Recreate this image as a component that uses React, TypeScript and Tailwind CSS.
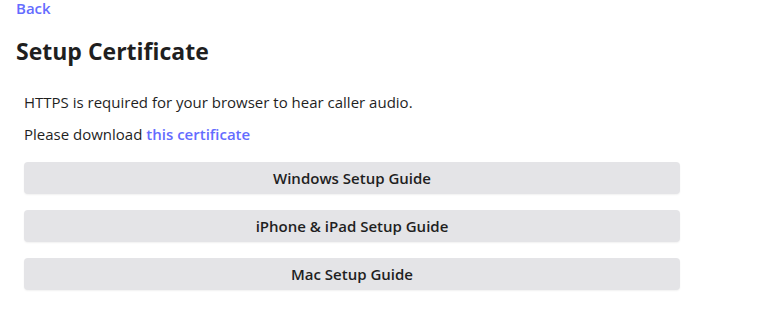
const guides = ["Windows Setup Guide", "iPhone & iPad Setup Guide", "Mac Setup Guide"]

export default function App() {
  return (
    <div
      className="min-h-screen bg-white px-4 text-[#213547]"
      style={{ fontFamily: '"Open Sans", "Noto Sans", sans-serif' }}
    >
      <a href="#" className="block text-[15px] leading-[17px] font-semibold text-[#646cff]">
        Back
      </a>
      <h1 className="mt-[18px] text-[23px] leading-[32px] font-bold text-[#1f1f1f]">Setup Certificate</h1>
      <div className="mt-[19px] pl-2 text-[15px] text-[#1f1f1f]">
        <p className="leading-[32px]">HTTPS is required for your browser to hear caller audio.</p>
        <p className="leading-[32px]">
          Please download{" "}
          <a href="#" className="font-semibold text-[#646cff]">
            this certificate
          </a>
        </p>
        <div className="mt-[12px] flex w-[656px] flex-col gap-4">
          {guides.map((g) => (
            <button
              key={g}
              className="h-8 w-full rounded-[4px] bg-[#e4e4e7] text-[15px] font-semibold text-[#1f1f1f] shadow-[0_1px_2px_rgba(0,0,0,0.06)]"
            >
              {g}
            </button>
          ))}
        </div>
      </div>
    </div>
  )
}
